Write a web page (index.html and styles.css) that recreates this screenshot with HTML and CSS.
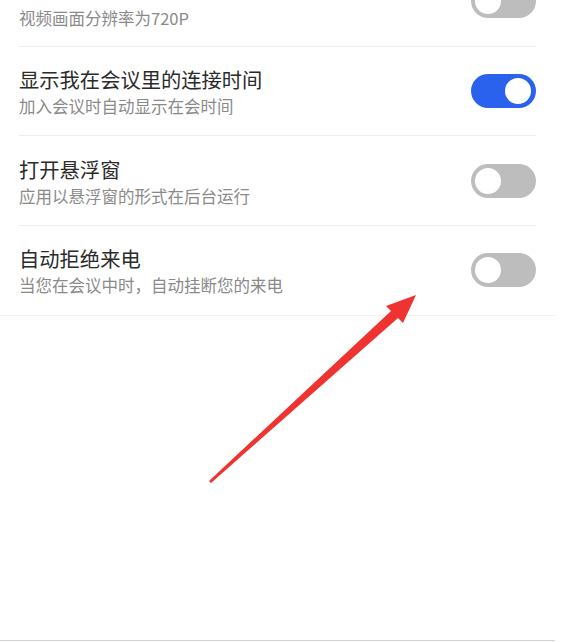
FILE: index.html
```html
<!DOCTYPE html>
<html lang="zh-CN">
<head>
<meta charset="utf-8">
<link rel="stylesheet" href="styles.css">
</head>
<body>
<div class="page">
  <div class="list">
    <div class="row first">
      <div class="text">
        <div class="sub">视频画面分辨率为720P</div>
      </div>
      <div class="toggle"></div>
    </div>
    <div class="row">
      <div class="text">
        <div class="title">显示我在会议里的连接时间</div>
        <div class="sub">加入会议时自动显示在会时间</div>
      </div>
      <div class="toggle on"></div>
    </div>
    <div class="row">
      <div class="text">
        <div class="title">打开悬浮窗</div>
        <div class="sub">应用以悬浮窗的形式在后台运行</div>
      </div>
      <div class="toggle"></div>
    </div>
    <div class="row last">
      <div class="text">
        <div class="title">自动拒绝来电</div>
        <div class="sub">当您在会议中时，自动挂断您的来电</div>
      </div>
      <div class="toggle"></div>
    </div>
  </div>
  <div class="spacer"></div>
  <svg class="arrow" width="568" height="642" viewBox="0 0 568 642">
    <polygon points="209,481 391,311 386,306 416,295 403,323 398,318 211,483" fill="#ee3330"/>
  </svg>
</div>
</body>
</html>
```

FILE: styles.css
```css
html, body {
  margin: 0;
  padding: 0;
  background: #ffffff;
}
body {
  font-family: "Noto Sans CJK SC", "Noto Sans", sans-serif;
  overflow: hidden;
}
.page {
  position: relative;
  width: 568px;
  height: 642px;
  overflow: hidden;
}
.list {
  width: 555px;
  border-bottom: 1px solid #f2f2f2;
}
.row {
  box-sizing: border-box;
  height: 89.4px;
  margin: 0 19px;
  display: flex;
  align-items: center;
  justify-content: space-between;
  border-bottom: 1px solid #ededed;
}
.row.first {
  height: 47px;
  align-items: flex-start;
}
.row.first .text {
  padding-top: 8px;
}
.row.first .toggle {
  margin-top: -16px;
}
.row.last {
  border-bottom: none;
}
.text {
  display: flex;
  flex-direction: column;
  gap: 4px;
}
.title {
  font-size: 20.3px;
  line-height: 26px;
  color: #2b2b2b;
}
.sub {
  font-size: 16.5px;
  line-height: 20px;
  color: #8a8a8a;
}
.toggle {
  position: relative;
  width: 65px;
  height: 34px;
  border-radius: 17px;
  background: #bdbdbd;
  flex-shrink: 0;
}
.toggle::after {
  content: "";
  position: absolute;
  left: 4px;
  top: 4px;
  width: 26px;
  height: 26px;
  border-radius: 50%;
  background: #ffffff;
}
.toggle.on {
  background: #2a62ee;
}
.toggle.on::after {
  left: auto;
  right: 5px;
}
.spacer {
  width: 555px;
  height: 324px;
  border-bottom: 1px solid #cfcfcf;
}
.arrow {
  position: absolute;
  left: 0;
  top: 0;
}
```
